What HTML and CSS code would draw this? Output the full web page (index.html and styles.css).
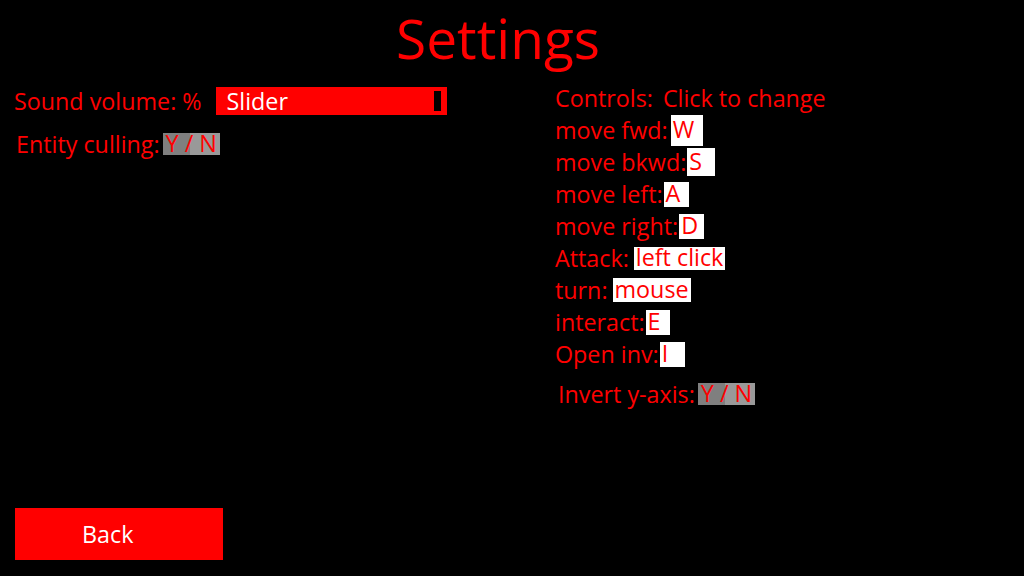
FILE: index.html
```html
<!DOCTYPE html>
<html lang="en">
<head>
    <meta charset="UTF-8">
    <meta name="viewport" content="width=device-width, initial-scale=1.0">
    <title>Settings</title>
    <link rel="stylesheet" href="styles.css">
</head>
<body>
    <h1 class="title">Settings</h1>

    <div class="columns">
        <div class="col-left">
            <div class="row row-volume">
                <span class="label">Sound volume: %</span>
                <div class="slider">
                    <span class="slider-text">Slider</span>
                    <span class="slider-handle"></span>
                </div>
            </div>
            <div class="row row-culling">
                <span class="label">Entity culling:</span>
                <span class="toggle">Y / N</span>
            </div>
        </div>

        <div class="col-right">
            <div class="row row-head">
                <span class="label">Controls:</span>
                <span class="label hint">Click to change</span>
            </div>
            <div class="row"><span class="label">move fwd:</span><span class="key key-w">W</span></div>
            <div class="row"><span class="label">move bkwd:</span><span class="key key-s">S</span></div>
            <div class="row"><span class="label">move left:</span><span class="key">A</span></div>
            <div class="row"><span class="label">move right:</span><span class="key">D</span></div>
            <div class="row"><span class="label">Attack:</span><span class="key key-click">left click</span></div>
            <div class="row"><span class="label">turn:</span><span class="key key-mouse">mouse</span></div>
            <div class="row"><span class="label">interact:</span><span class="key key-e">E</span></div>
            <div class="row"><span class="label">Open inv:</span><span class="key">I</span></div>
            <div class="row row-invert">
                <span class="label">Invert y-axis:</span>
                <span class="toggle">Y / N</span>
            </div>
        </div>
    </div>

    <button class="back">Back</button>
</body>
</html>
```

FILE: styles.css
```css
body {
    margin: 0;
    width: 1024px;
    height: 576px;
    background: #000;
    color: #ff0000;
    font-family: "Open Sans", "Noto Sans", sans-serif;
    display: flex;
    flex-direction: column;
    overflow: hidden;
}

.title {
    margin: 0 0 -1px;
    font-size: 55px;
    font-weight: normal;
    line-height: normal;
    text-align: center;
    padding-right: 28px;
}

.columns {
    display: flex;
}

.col-left {
    width: 541px;
    padding-left: 14px;
}

.col-right {
    flex: 1;
}

.row {
    display: flex;
    align-items: center;
    height: 32px;
    font-size: 23.3px;
}

.label {
    white-space: nowrap;
}

/* left column */
.row-volume {
    height: 54px;
}

.slider {
    position: relative;
    margin-left: 14px;
    width: 231px;
    height: 28px;
    background: #ff0000;
    color: #fff;
    display: flex;
    align-items: center;
}

.slider-text {
    padding-left: 11px;
}

.slider-handle {
    position: absolute;
    left: 218px;
    top: 4px;
    width: 7px;
    height: 20px;
    background: #000;
}

.row-culling {
    padding-left: 2px;
}

.toggle {
    display: inline-flex;
    align-items: center;
    box-sizing: border-box;
    width: 57px;
    height: 22px;
    padding-left: 3px;
    margin-left: 3px;
    line-height: 1;
    white-space: nowrap;
    background: linear-gradient(to right, #7f7f7f 48%, #999 48%);
}

/* right column */
.row-head {
    height: 40px;
    align-items: flex-end;
}

.hint {
    margin-left: 10px;
}

.key {
    display: inline-flex;
    align-items: center;
    box-sizing: border-box;
    width: 25px;
    height: 25px;
    padding-left: 2px;
    margin-left: 1px;
    line-height: 1;
    white-space: nowrap;
    background: #fff;
}

.key-w {
    width: 32px;
    height: 31px;
    margin-left: 3px;
}

.key-s {
    width: 28px;
    height: 28px;
}

.key-click {
    width: 91px;
    height: 23px;
    margin-left: 5px;
}

.key-mouse {
    width: 78px;
    height: 24px;
    margin-left: 5px;
}

.key-e {
    width: 24px;
}

.row-invert {
    margin-top: 8px;
    padding-left: 3px;
}

/* back button */
.back {
    margin: auto 0 16px 15px;
    width: 208px;
    height: 52px;
    padding: 0 0 0 67px;
    border: none;
    background: #ff0000;
    color: #fff;
    font-family: inherit;
    font-size: 23.3px;
    text-align: left;
    cursor: pointer;
}
```
